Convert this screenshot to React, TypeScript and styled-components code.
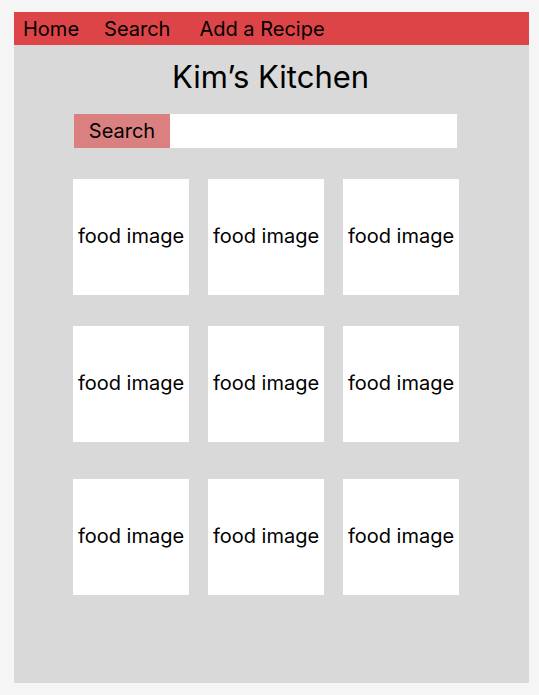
import styled, { createGlobalStyle } from 'styled-components';

const GlobalStyle = createGlobalStyle`
  body {
    margin: 0;
    background-color: #f5f5f5;
    font-family: Inter, 'Noto Sans', sans-serif;
    color: #000;
  }
`;

const NAV_LINKS = ['Home', 'Search', 'Add a Recipe'];

// space above each row of cards, as laid out in the mockup
const ROW_OFFSETS = [31, 31, 37];

const App = () => {
  return (
    <>
      <GlobalStyle />
      <Frame>
        <NavBar>
          {NAV_LINKS.map(link => (
            <NavLink key={link}>{link}</NavLink>
          ))}
        </NavBar>
        <Title>Kim’s Kitchen</Title>
        <SearchBar>
          <SearchButton>Search</SearchButton>
          <SearchInput aria-label="search" />
        </SearchBar>
        {ROW_OFFSETS.map((offset, r) => (
          <CardRow key={r} $offset={offset}>
            {[0, 1, 2].map(c => (
              <FoodCard key={c}>food image</FoodCard>
            ))}
          </CardRow>
        ))}
      </Frame>
    </>
  );
};

export default App;

const Frame = styled.div`
  margin: 12px 0 0 14px;
  width: 515px;
  height: 671px;
  background-color: #d9d9d9;
  display: flex;
  flex-direction: column;
`;

const NavBar = styled.nav`
  height: 33px;
  background-color: #dd4447;
  display: flex;
  align-items: center;
  padding-left: 9px;
  gap: 25px;
`;

const NavLink = styled.a`
  font-size: 20px;
  color: #000;
  line-height: 1;
  &:last-child {
    margin-left: 4px;
  }
`;

const Title = styled.h1`
  margin: 13px 0 0 -2px;
  font-size: 31px;
  font-weight: 400;
  line-height: 38px;
  text-align: center;
`;

const SearchBar = styled.div`
  margin: 18px 0 0 60px;
  width: 383px;
  height: 34px;
  display: flex;
`;

const SearchButton = styled.button`
  width: 96px;
  border: none;
  background-color: #db8080;
  font-family: inherit;
  font-size: 20px;
  color: #000;
  padding: 0;
`;

const SearchInput = styled.input`
  flex: 1;
  border: none;
  outline: none;
  background-color: #fff;
`;

const CardRow = styled.div<{ $offset: number }>`
  margin: ${p => p.$offset}px 0 0 59px;
  display: grid;
  grid-template-columns: repeat(3, 116px);
  column-gap: 19px;
`;

const FoodCard = styled.div`
  height: 116px;
  background-color: #fff;
  display: flex;
  align-items: center;
  justify-content: center;
  padding-bottom: 2px;
  box-sizing: border-box;
  font-size: 20px;
  white-space: nowrap;
`;
